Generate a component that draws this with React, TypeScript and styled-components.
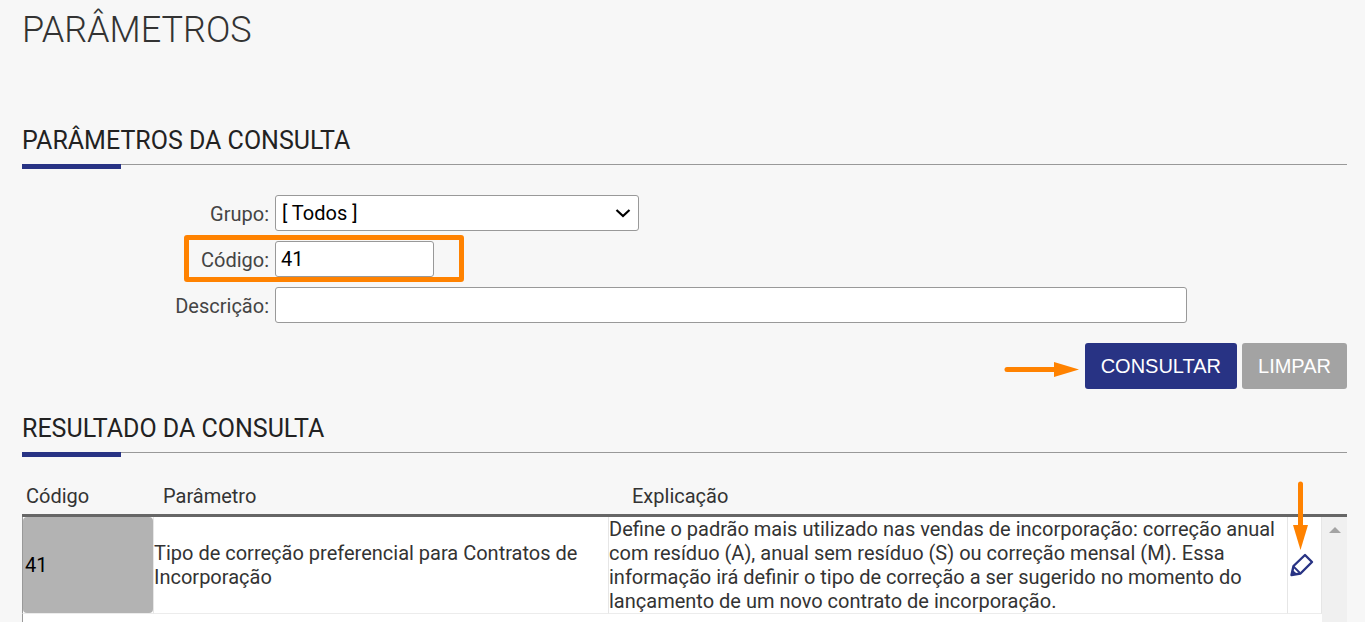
import React from "react";
import styled, { createGlobalStyle } from "styled-components";

const ORANGE = "#ff8200";
const NAVY = "#283384";

const GlobalStyle = createGlobalStyle`
  *, *::before, *::after { box-sizing: border-box; }
  body {
    margin: 0;
    background: #f7f7f7;
    color: #333;
    font-family: Roboto, "Liberation Sans", sans-serif;
    font-size: 20px;
    line-height: 24px;
  }
`;

const Page = styled.main`
  display: flex;
  flex-direction: column;
  min-height: 100vh;
  padding: 6px 18px 0 22px;
`;

const Title = styled.h1`
  margin: 0 0 70px;
  font-size: 36px;
  line-height: 48px;
  font-weight: 300;
`;

const SectionTitle = styled.h2`
  margin: 0;
  height: 41px;
  border-bottom: 1px solid #999;
  color: #222;
  font-size: 25px;
  line-height: 34px;
  font-weight: 400;

  &::after {
    content: "";
    display: block;
    width: 99px;
    height: 5px;
    margin-top: 6px;
    background: ${NAVY};
  }
`;

const Form = styled.form`
  display: flex;
  flex-direction: column;
  gap: 10px;
  padding: 30px 0 23px;
`;

const Field = styled.div`
  position: relative;
  display: grid;
  grid-template-columns: 247px minmax(0, 1fr);
  column-gap: 6px;
  align-items: center;
`;

const Label = styled.label`
  padding-top: 2px;
  text-align: right;
  color: #444;
`;

const TextBox = styled.input<{ $width: number }>`
  width: ${(p) => p.$width}px;
  max-width: 100%;
  height: 36px;
  padding: 0 5px;
  border: 1px solid #999;
  border-radius: 3px;
  background: #fff;
  color: #000;
  font: inherit;
`;

const SelectWrap = styled.div`
  position: relative;
  width: 364px;
  max-width: 100%;
  height: 36px;
`;

const Select = styled.select`
  appearance: none;
  width: 100%;
  height: 36px;
  padding: 0 36px 0 6px;
  border: 1px solid #999;
  border-radius: 3px;
  background: #fff;
  color: #000;
  font: inherit;
`;

const Chevron = styled.svg`
  position: absolute;
  top: 13px;
  right: 8px;
  pointer-events: none;
`;

const Highlight = styled.span`
  position: absolute;
  top: -6px;
  bottom: -5px;
  left: 162px;
  width: 280px;
  border: 5px solid ${ORANGE};
  border-radius: 3px;
  pointer-events: none;
`;

const Actions = styled.div`
  position: relative;
  display: flex;
  justify-content: flex-end;
  gap: 5px;
  padding-top: 10px;
`;

const Button = styled.button<{ $primary?: boolean }>`
  position: relative;
  height: 46px;
  padding: 0 16px;
  border: 0;
  border-radius: 3px;
  background: ${(p) => (p.$primary ? NAVY : "#a3a3a3")};
  color: #fff;
  font-family: "Liberation Sans", Arial, sans-serif;
  font-size: 20px;
`;

const RightArrow = styled.svg`
  position: absolute;
  top: 18px;
  right: calc(100% + 6px);
`;

const Results = styled.div`
  flex: 1;
  display: flex;
  padding-top: 25px;
`;

const TableArea = styled.div`
  flex: 1;
  min-width: 0;
  display: flex;
  flex-direction: column;
`;

const Table = styled.table`
  width: 100%;
  table-layout: fixed;
  border-collapse: separate;
  border-spacing: 0;
`;

const Th = styled.th<{ $indent?: number }>`
  height: 39px;
  padding: 0 0 0 ${(p) => p.$indent ?? 0}px;
  border-bottom: 3px solid #666;
  text-align: left;
  font-weight: 400;
  color: #333;
`;

const Td = styled.td`
  position: relative;
  height: 97px;
  padding: 0;
  border-right: 1px solid #e6e6e6;
  border-bottom: 1px solid #ececec;
  background: #fff;
  vertical-align: middle;

  &:first-child { border-left: 1px solid #999; }
`;

const CodeBox = styled.input`
  display: block;
  width: 100%;
  height: 96px;
  padding: 0 2px;
  border: 0;
  border-radius: 4px;
  background: #b3b3b3;
  color: #000;
  font: inherit;
`;

const IconButton = styled.button`
  display: block;
  padding: 0 0 0 1px;
  border: 0;
  background: none;
`;

const DownArrow = styled.svg`
  position: absolute;
  bottom: calc(50% + 15px);
  left: 5px;
  pointer-events: none;
`;

const Filler = styled.div`
  flex: 1;
  border-left: 1px solid #999;
  background: #fff;
`;

const ScrollTrack = styled.div`
  width: 25px;
  margin-top: 36px;
  padding: 10px 0 0 7px;
  border-top: 3px solid #666;
  background: #f0f0f0;

  svg { display: block; }
`;

export default function App() {
  return (
    <>
      <GlobalStyle />
      <Page>
        <Title>PARÂMETROS</Title>

        <SectionTitle>PARÂMETROS DA CONSULTA</SectionTitle>
        <Form onSubmit={(e) => e.preventDefault()}>
          <Field>
            <Label htmlFor="grupo">Grupo:</Label>
            <SelectWrap>
              <Select id="grupo">
                <option>[ Todos ]</option>
              </Select>
              <Chevron width="16" height="10" viewBox="0 0 16 10" aria-hidden="true">
                <path d="M1.5 2 8 8 14.5 2" fill="none" stroke="#000" strokeWidth="2.2" />
              </Chevron>
            </SelectWrap>
          </Field>
          <Field>
            <Label htmlFor="codigo">Código:</Label>
            <TextBox id="codigo" $width={159} defaultValue="41" />
            <Highlight />
          </Field>
          <Field>
            <Label htmlFor="descricao">Descrição:</Label>
            <TextBox id="descricao" $width={912} />
          </Field>
          <Actions>
            <Button type="submit" $primary>
              CONSULTAR
              <RightArrow width="76" height="16" viewBox="0 0 76 16" aria-hidden="true">
                <path d="M4 8.5H52" stroke={ORANGE} strokeWidth="5" strokeLinecap="round" />
                <path d="M51 1v15l25-7.5z" fill={ORANGE} />
              </RightArrow>
            </Button>
            <Button type="reset">LIMPAR</Button>
          </Actions>
        </Form>

        <SectionTitle>RESULTADO DA CONSULTA</SectionTitle>
        <Results>
          <TableArea>
            <Table>
              <colgroup>
                <col style={{ width: 132 }} />
                <col style={{ width: "35%" }} />
                <col />
                <col style={{ width: 34 }} />
              </colgroup>
              <thead>
                <tr>
                  <Th $indent={4}>Código</Th>
                  <Th $indent={9}>Parâmetro</Th>
                  <Th $indent={23}>Explicação</Th>
                  <Th aria-label="Ações" />
                </tr>
              </thead>
              <tbody>
                <tr>
                  <Td>
                    <CodeBox aria-label="Código" defaultValue="41" readOnly />
                  </Td>
                  <Td>Tipo de correção preferencial para Contratos de Incorporação</Td>
                  <Td>
                    Define o padrão mais utilizado nas vendas de incorporação: correção anual com
                    resíduo (A), anual sem resíduo (S) ou correção mensal (M). Essa informação irá
                    definir o tipo de correção a ser sugerido no momento do lançamento de um novo
                    contrato de incorporação.
                  </Td>
                  <Td>
                    <IconButton type="button" aria-label="Editar">
                      <svg width="26" height="26" viewBox="0 0 26 26" aria-hidden="true">
                        <g fill="none" stroke={NAVY} strokeWidth="2.4" strokeLinejoin="round">
                          <path d="M2.500 24 4.500 15 16 4l7 7L11.500 22.500z" />
                          <path d="M4.500 15.500 11 22" strokeWidth="1.800" />
                        </g>
                        <path d="M2 24.500 3.200 18.500l5 4.500z" fill={NAVY} />
                      </svg>
                    </IconButton>
                    <DownArrow width="16" height="69" viewBox="0 0 16 69" aria-hidden="true">
                      <path d="M7.500 3V46" stroke={ORANGE} strokeWidth="5" strokeLinecap="round" />
                      <path d="M0 44h15L7.500 69z" fill={ORANGE} />
                    </DownArrow>
                  </Td>
                </tr>
              </tbody>
            </Table>
            <Filler />
          </TableArea>
          <ScrollTrack aria-hidden="true">
            <svg width="12" height="6" viewBox="0 0 12 6">
              <path d="M0 6 6 0l6 6z" fill="#a3a3a3" />
            </svg>
          </ScrollTrack>
        </Results>
      </Page>
    </>
  );
}
